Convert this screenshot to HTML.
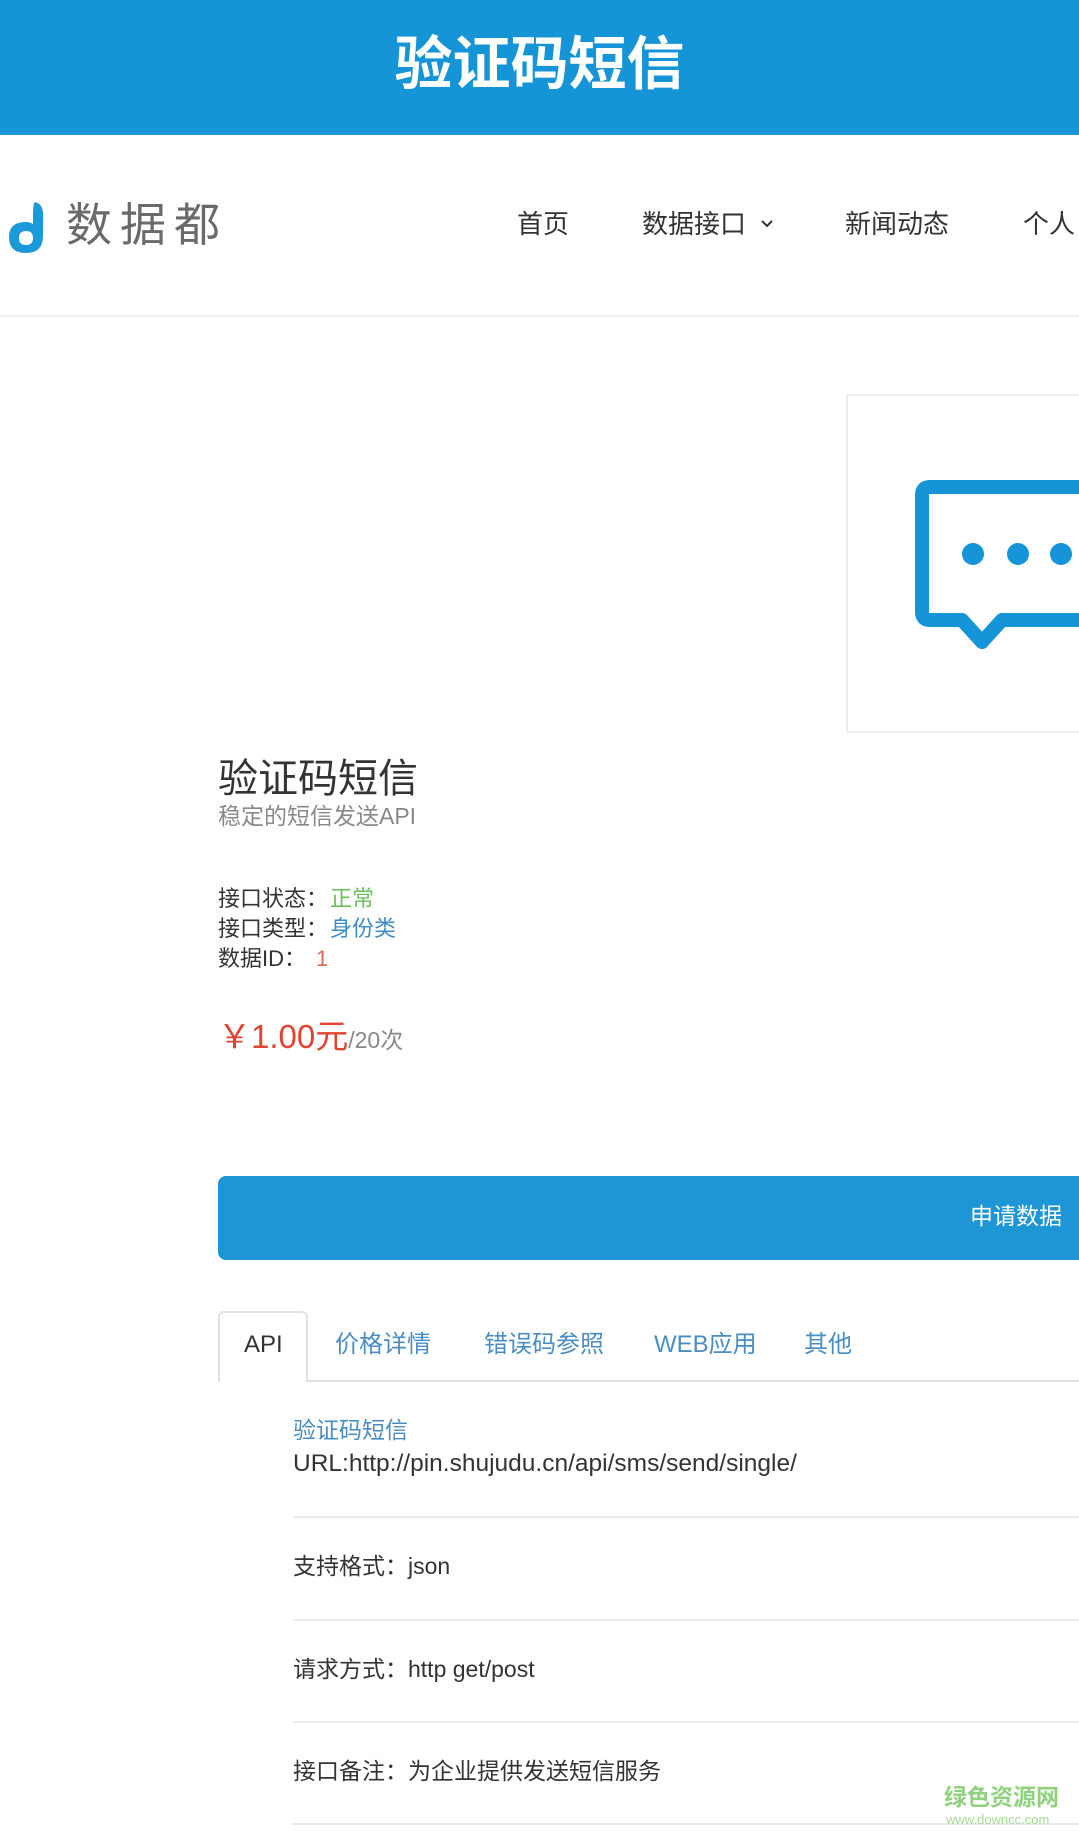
<!DOCTYPE html>
<html><head><meta charset="utf-8"><style>
*{margin:0;padding:0;box-sizing:border-box}
body{width:1079px;height:1836px;overflow:hidden;background:#fff;font-family:"Liberation Sans","Noto Sans CJK SC",sans-serif;position:relative;color:#333}
.a{position:absolute;white-space:nowrap;line-height:1}
.hr{position:absolute;left:293px;right:0;height:2px;background:#ececec}
</style></head><body>
<div class="a" style="left:0;top:0;width:1079px;height:135px;background:#1594d6"></div>
<div class="a" style="left:0;width:1079px;top:36px;text-align:center;color:#fff;font-size:58px;font-weight:bold">验证码短信</div>

<svg class="a" style="left:5px;top:200px" width="42" height="54" viewBox="0 0 42 54"><path d="M30 2 Q38 4 38 14 L38 36 Q38 53 21 53 Q4 53 4 37 Q4 22 21 22 Q25 22 28 24 L28 14 Q28 4 30 2Z M21 31 Q14 31 14 38 Q14 45 21 45 Q28 45 28 38 Q28 31 21 31Z" fill="#1a9ad9" fill-rule="evenodd"/></svg>
<div class="a" style="left:66px;top:202px;font-size:46px;color:#6a6a6a;letter-spacing:8px">数据都</div>
<div class="a" style="left:517px;top:211px;font-size:26px;color:#333">首页</div>
<div class="a" style="left:642px;top:211px;font-size:26px;color:#333">数据接口</div>
<svg class="a" style="left:760px;top:219px" width="14" height="10"><path d="M2 2 L7 7 L12 2" stroke="#333" stroke-width="2" fill="none"/></svg>
<div class="a" style="left:845px;top:211px;font-size:26px;color:#333">新闻动态</div>
<div class="a" style="left:1023px;top:211px;font-size:26px;color:#333">个人</div>
<div class="a" style="left:0;top:315px;width:1079px;height:2px;background:#f0f0f0"></div>

<div class="a" style="left:846px;top:394px;width:260px;height:339px;border:2px solid #eee"></div>
<svg class="a" style="left:900px;top:470px" width="179" height="200"><path d="M30 17 H200 V150 H102 L82 172 L62 150 H30 Q22 150 22 142 V25 Q22 17 30 17Z" stroke="#1694d8" stroke-width="14" fill="none" stroke-linejoin="round"/><circle cx="73" cy="84" r="11" fill="#1694d8"/><circle cx="118" cy="84" r="11" fill="#1694d8"/><circle cx="161" cy="84" r="11" fill="#1694d8"/></svg>

<div class="a" style="left:218px;top:759px;font-size:40px;color:#333">验证码短信</div>
<div class="a" style="left:218px;top:805px;font-size:23px;color:#888">稳定的短信发送API</div>
<div class="a" style="left:218px;top:888px;font-size:22px;color:#333">接口状态：<span style="color:#6cbf5c;margin-left:2px">正常</span></div>
<div class="a" style="left:218px;top:918px;font-size:22px;color:#333">接口类型：<span style="color:#3f8cc5;margin-left:2px">身份类</span></div>
<div class="a" style="left:218px;top:948px;font-size:22px;color:#333">数据ID：<span style="color:#e06a4f;margin-left:10px">1</span></div>
<div class="a" style="left:218px;top:1020px;font-size:33px;color:#e0432f">￥1.00元<span style="font-size:23px;color:#888">/20次</span></div>

<div class="a" style="left:218px;top:1176px;width:880px;height:84px;background:#1e95d4;border-radius:8px"></div>
<div class="a" style="left:970px;top:1205px;font-size:23px;color:#fff">申请数据</div>

<div class="a" style="left:218px;top:1380px;width:861px;height:2px;background:#e2e2e2"></div>
<div class="a" style="left:218px;top:1311px;width:90px;height:71px;border:2px solid #e2e2e2;border-bottom:none;border-radius:6px 6px 0 0;background:#fff"></div>
<div class="a" style="left:244px;top:1333px;font-size:24px;color:#333">API</div>
<div class="a" style="left:335px;top:1333px;font-size:24px;color:#4a8dc2">价格详情</div>
<div class="a" style="left:484px;top:1333px;font-size:24px;color:#4a8dc2">错误码参照</div>
<div class="a" style="left:654px;top:1333px;font-size:24px;color:#4a8dc2">WEB应用</div>
<div class="a" style="left:804px;top:1333px;font-size:24px;color:#4a8dc2">其他</div>

<div class="a" style="left:293px;top:1419px;font-size:23px;color:#4a8dc2">验证码短信</div>
<div class="a" style="left:293px;top:1452px;font-size:24.5px;color:#333">URL:http://pin.shujudu.cn/api/sms/send/single/</div>
<div class="hr" style="top:1516px"></div>
<div class="a" style="left:293px;top:1555px;font-size:23px;color:#333">支持格式：json</div>
<div class="hr" style="top:1619px"></div>
<div class="a" style="left:293px;top:1658px;font-size:23px;color:#333">请求方式：http get/post</div>
<div class="hr" style="top:1721px"></div>
<div class="a" style="left:293px;top:1760px;font-size:23px;color:#333">接口备注：为企业提供发送短信服务</div>
<div class="hr" style="top:1823px"></div>

<div class="a" style="left:944px;top:1786px;font-size:23px;font-weight:bold;color:#8fd17c">绿色资源网</div>
<div class="a" style="left:946px;top:1813px;font-size:13px;color:#a6d998">www.downcc.com</div>
</body></html>
